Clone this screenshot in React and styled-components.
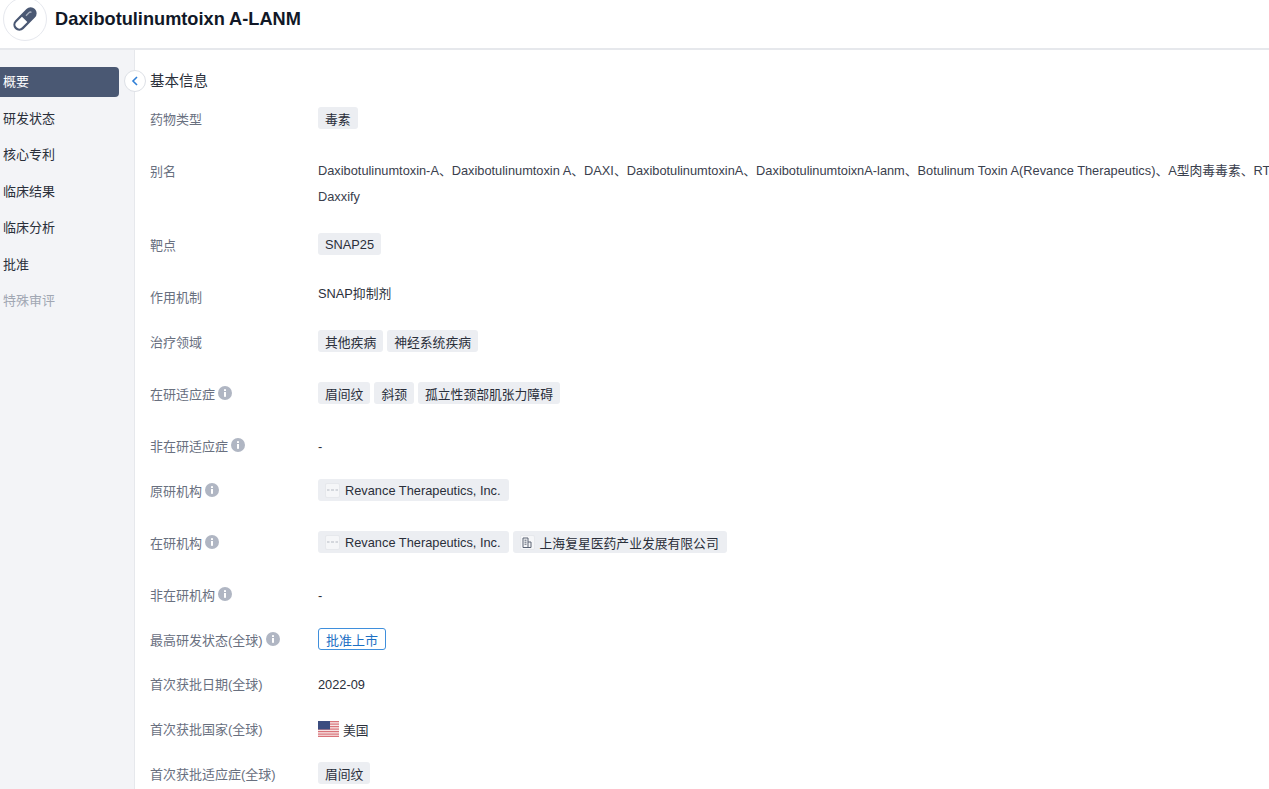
import React from 'react';
import styled, { createGlobalStyle } from 'styled-components';

const GlobalStyle = createGlobalStyle`
  html, body {
    margin: 0;
    height: 100%;
    overflow: hidden;
    background: #fff;
  }
  body {
    font-family: "Liberation Sans", "Noto Sans CJK SC", sans-serif;
    font-size: 13px;
    color: #2a2f3a;
  }
`;

const Page = styled.div`
  height: 789px;
  display: flex;
  flex-direction: column;
  overflow: hidden;
`;

const Header = styled.header`
  height: 48px;
  flex-shrink: 0;
  display: flex;
  align-items: flex-start;
  gap: 8px;
  padding-left: 3px;
  border-bottom: 2px solid #e6e8ec;
  overflow: hidden;
`;

const LogoCircle = styled.div`
  width: 44px;
  height: 44px;
  margin-top: -3px;
  flex-shrink: 0;
  display: flex;
  align-items: center;
  justify-content: center;
  border: 1px solid #e6e8ee;
  border-radius: 50%;
  box-sizing: border-box;
`;

const Title = styled.h1`
  margin: 6px 0 0;
  font-size: 18.2px;
  line-height: 26px;
  font-weight: 700;
  color: #111827;
`;

const Body = styled.div`
  flex: 1;
  display: flex;
  min-height: 0;
`;

const Sidebar = styled.nav`
  position: relative;
  width: 135px;
  flex-shrink: 0;
  box-sizing: border-box;
  padding-top: 17px;
  background: #f3f4f7;
  border-right: 1px solid #e6e8ec;
`;

const NavItem = styled.div`
  width: 127px;
  height: 30px;
  margin-left: -8px;
  margin-bottom: 6.5px;
  padding: 0 0 3px 11px;
  box-sizing: border-box;
  display: flex;
  align-items: center;
  border-radius: 4px;
  font-size: 13px;
  color: ${(p) => (p.$active ? '#fff' : p.$disabled ? '#a1a7b3' : '#2a2f3a')};
  background: ${(p) => (p.$active ? '#4a5873' : 'transparent')};
`;

const CollapseButton = styled.button`
  position: absolute;
  top: 20px;
  right: -12px;
  width: 22px;
  height: 22px;
  padding: 0;
  display: flex;
  align-items: center;
  justify-content: center;
  background: #fff;
  border: 1px solid #dde0e6;
  border-radius: 50%;
`;

const Main = styled.main`
  flex: 1;
  min-width: 0;
  padding: 21px 0 0 15px;
  overflow: hidden;
`;

const SectionTitle = styled.h2`
  margin: 0 0 16px;
  font-size: 14.5px;
  line-height: 20px;
  font-weight: 400;
  color: #2a2f3a;
`;

const Row = styled.div`
  height: ${(p) => p.$h}px;
  display: grid;
  grid-template-columns: 168px 1fr;
`;

const Label = styled.div`
  display: flex;
  align-items: center;
  gap: 3px;
  height: ${(p) => p.$lh || 22}px;
  margin-top: ${(p) => p.$drop || 0}px;
  color: #69707f;
  white-space: nowrap;
`;

const Value = styled.div`
  display: flex;
  align-items: center;
  gap: 4px;
  height: 22px;
  color: #2a2f3a;
  font-size: 12.8px;
`;

const TextValue = styled(Value)`
  padding-top: 1px;
`;

const Aliases = styled.div`
  padding-top: 1px;
  line-height: 26px;
  font-size: 12.8px;
  white-space: nowrap;
  color: #3a404d;
`;

const Tag = styled.span`
  display: inline-flex;
  align-items: center;
  gap: 4px;
  height: 22px;
  padding: 0 7px;
  box-sizing: border-box;
  border-radius: 3px;
  background: #eceef2;
  color: #2a2f3a;
  white-space: nowrap;
  font-size: 12.8px;
`;

const OrgTag = styled(Tag)`
  gap: 5px;
  padding: 0 8px 0 7px;
`;

const StatusTag = styled.span`
  display: inline-flex;
  align-items: center;
  height: 22px;
  padding: 0 7px;
  box-sizing: border-box;
  border: 1px solid #3f8fdc;
  border-radius: 3px;
  color: #1c6fc4;
  font-size: 13px;
  white-space: nowrap;
`;

const OrgLogo = styled.span`
  width: 15px;
  height: 15px;
  display: inline-flex;
  align-items: center;
  justify-content: center;
  box-sizing: border-box;
  background: #f5f6f8;
  border: 1px solid #e6e8ec;
  border-radius: 2px;
`;

const PillIcon = () => (
  <svg width="30" height="30" viewBox="0 0 30 30">
    <g transform="rotate(45 15 15)">
      <rect x="9" y="1" width="12" height="28" rx="6" fill="#4a5873" />
      <path d="M11.2 15.5h7.6V23a3.8 3.8 0 0 1-7.6 0z" fill="#fff" />
      <path d="M13.4 12V7.5a1.6 1.6 0 0 1 1.6-1.6" fill="none" stroke="#aab2c0" strokeWidth="1.3" />
    </g>
  </svg>
);

const ChevronLeft = () => (
  <svg width="10" height="12" viewBox="0 0 10 12">
    <path d="M7 2 3 6l4 4" fill="none" stroke="#2f7fd6" strokeWidth="1.6" />
  </svg>
);

const InfoIcon = () => (
  <svg width="14" height="14" viewBox="0 0 14 14">
    <circle cx="7" cy="7" r="7" fill="#b0b6c3" />
    <rect x="6" y="6" width="2" height="4.8" fill="#fff" />
    <rect x="6" y="3.2" width="2" height="1.8" fill="#fff" />
  </svg>
);

const RevanceLogo = () => (
  <OrgLogo>
    <svg width="11" height="4" viewBox="0 0 11 4">
      <path d="M0 2h2.5M4 2h3M8.5 2H11" stroke="#b4b9c2" strokeWidth="1" />
    </svg>
  </OrgLogo>
);

const BuildingLogo = () => (
  <OrgLogo>
    <svg width="10" height="11" viewBox="0 0 10 11">
      <path d="M1 10.5V1h5v9.5zM6 5h3v5.5H6M2.5 3.2h2M2.5 5.2h2M2.5 7.2h2" fill="none" stroke="#5a6373" strokeWidth="1" />
    </svg>
  </OrgLogo>
);

const UsFlag = () => (
  <svg width="21" height="16" viewBox="0 0 21 16">
    <rect width="21" height="16" fill="#f7e4e4" />
    {[0, 2.5, 5, 7.5, 10, 12.5, 14.8].map((y) => (
      <rect key={y} y={y} width="21" height="1.2" fill="#d9737a" />
    ))}
    <rect width="12" height="8.5" fill="#3b4d80" />
  </svg>
);

const navItems = ['概要', '研发状态', '核心专利', '临床结果', '临床分析', '批准', '特殊审评'];

const App = () => (
  <Page>
    <GlobalStyle />
    <Header>
      <LogoCircle>
        <PillIcon />
      </LogoCircle>
      <Title>Daxibotulinumtoixn A-LANM</Title>
    </Header>
    <Body>
      <Sidebar>
        {navItems.map((item, i) => (
          <NavItem key={item} $active={i === 0} $disabled={i === 6}>
            {item}
          </NavItem>
        ))}
        <CollapseButton>
          <ChevronLeft />
        </CollapseButton>
      </Sidebar>
      <Main>
        <SectionTitle>基本信息</SectionTitle>
        <Row $h={50}>
          <Label>药物类型</Label>
          <Value>
            <Tag>毒素</Tag>
          </Value>
        </Row>
        <Row $h={76}>
          <Label $lh={26}>别名</Label>
          <Aliases>
            Daxibotulinumtoxin-A、Daxibotulinumtoxin A、DAXI、DaxibotulinumtoxinA、DaxibotulinumtoixnA-lanm、Botulinum Toxin A(Revance Therapeutics)、A型肉毒毒素、RT-002
            <br />
            Daxxify
          </Aliases>
        </Row>
        <Row $h={48}>
          <Label>靶点</Label>
          <Value>
            <Tag>SNAP25</Tag>
          </Value>
        </Row>
        <Row $h={49}>
          <Label $drop={4}>作用机制</Label>
          <Value>SNAP抑制剂</Value>
        </Row>
        <Row $h={52}>
          <Label>治疗领域</Label>
          <Value>
            <Tag>其他疾病</Tag>
            <Tag>神经系统疾病</Tag>
          </Value>
        </Row>
        <Row $h={52}>
          <Label>
            在研适应症 <InfoIcon />
          </Label>
          <Value>
            <Tag>眉间纹</Tag>
            <Tag>斜颈</Tag>
            <Tag>孤立性颈部肌张力障碍</Tag>
          </Value>
        </Row>
        <Row $h={45}>
          <Label>
            非在研适应症 <InfoIcon />
          </Label>
          <TextValue>-</TextValue>
        </Row>
        <Row $h={52}>
          <Label>
            原研机构 <InfoIcon />
          </Label>
          <Value>
            <OrgTag>
              <RevanceLogo />
              Revance Therapeutics, Inc.
            </OrgTag>
          </Value>
        </Row>
        <Row $h={52}>
          <Label>
            在研机构 <InfoIcon />
          </Label>
          <Value>
            <OrgTag>
              <RevanceLogo />
              Revance Therapeutics, Inc.
            </OrgTag>
            <OrgTag>
              <BuildingLogo />
              上海复星医药产业发展有限公司
            </OrgTag>
          </Value>
        </Row>
        <Row $h={45}>
          <Label>
            非在研机构 <InfoIcon />
          </Label>
          <TextValue>-</TextValue>
        </Row>
        <Row $h={44}>
          <Label>
            最高研发状态(全球) <InfoIcon />
          </Label>
          <Value>
            <StatusTag>批准上市</StatusTag>
          </Value>
        </Row>
        <Row $h={45}>
          <Label>首次获批日期(全球)</Label>
          <TextValue>2022-09</TextValue>
        </Row>
        <Row $h={45}>
          <Label>首次获批国家(全球)</Label>
          <TextValue>
            <UsFlag /> 美国
          </TextValue>
        </Row>
        <Row $h={26}>
          <Label>首次获批适应症(全球)</Label>
          <Value>
            <Tag>眉间纹</Tag>
          </Value>
        </Row>
      </Main>
    </Body>
  </Page>
);

export default App;
